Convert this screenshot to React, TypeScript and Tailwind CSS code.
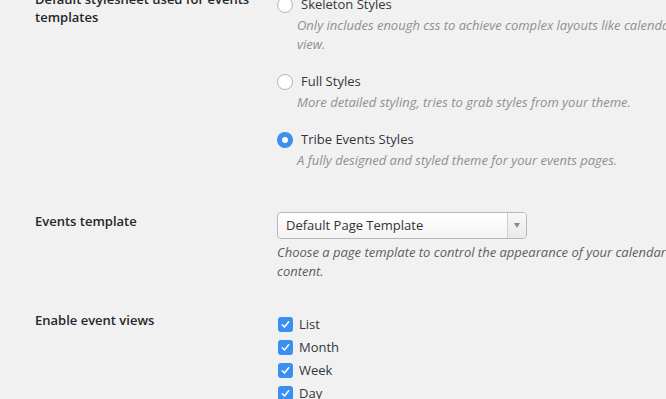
import React from "react";

const font = { fontFamily: '"Open Sans", "Noto Sans", sans-serif' };

function Radio({ checked }: { checked?: boolean }) {
  if (checked) {
    return (
      <span className="flex h-4 w-4 shrink-0 items-center justify-center rounded-full bg-[#3b8ff0]">
        <span className="h-[6px] w-[6px] rounded-full bg-white" />
      </span>
    );
  }
  return <span className="block h-4 w-4 shrink-0 rounded-full border border-[#b5b5b5] bg-white" />;
}

function Check() {
  return (
    <span className="flex h-[15px] w-[15px] shrink-0 items-center justify-center rounded-[3px] bg-[#3b8ff0]">
      <svg width="11" height="11" viewBox="0 0 11 11" fill="none">
        <path d="M2.3 5.8 L4.5 8 L8.7 2.8" stroke="white" strokeWidth="1.5" strokeLinecap="round" strokeLinejoin="round" />
      </svg>
    </span>
  );
}

const radios = [
  {
    label: "Skeleton Styles",
    desc: "Only includes enough css to achieve complex layouts like calendar and week view.",
  },
  { label: "Full Styles", desc: "More detailed styling, tries to grab styles from your theme." },
  { label: "Tribe Events Styles", desc: "A fully designed and styled theme for your events pages.", checked: true },
];

export default function App() {
  return (
    <div className="h-[399px] w-[666px] overflow-hidden bg-[#f1f1f1] text-[13px]" style={font}>
      <div className="mt-[-10px] grid grid-cols-[242px_460px] pl-[35px]">
        {/* Row 1 */}
        <div className="text-[13px] font-semibold leading-[18px] text-[#23282d] pr-4">
          Default stylesheet used for events templates
        </div>
        <div className="mt-[5px] flex flex-col gap-[18px]">
          {radios.map((r) => (
            <div key={r.label}>
              <div className="flex items-center gap-2 leading-[19px] text-[#32373c]">
                <Radio checked={r.checked} />
                <span>{r.label}</span>
              </div>
              <div className="mt-[2px] pl-5 italic leading-[19px] text-[#8f8f8f]">{r.desc}</div>
            </div>
          ))}
        </div>

        {/* Row 2 */}
        <div className="mt-[42px] font-semibold leading-[19px] text-[#23282d]">Events template</div>
        <div className="mt-[42px]">
          <div className="flex h-[27px] w-[250px] items-stretch overflow-hidden rounded-[4px] border border-[#b8b8b8] bg-gradient-to-b from-white to-[#f3f3f3]">
            <div className="flex flex-1 items-center pl-2 text-[#333]">Default Page Template</div>
            <div className="flex w-[19px] items-center justify-center border-l border-[#cfcfcf] bg-gradient-to-b from-[#f8f8f8] to-[#e9e9e9]">
              <svg width="6" height="5" viewBox="0 0 6 5">
                <path d="M0 0 H6 L3 5 Z" fill="#8a8a8a" />
              </svg>
            </div>
          </div>
          <div className="mt-[4px] w-[440px] italic leading-[19px] text-[#5e5e5e]">
            Choose a page template to control the appearance of your calendar related content.
          </div>
        </div>

        {/* Row 3 */}
        <div className="mt-[30px] font-semibold leading-[19px] text-[#23282d]">Enable event views</div>
        <div className="mt-[32px] flex flex-col">
          {["List", "Month", "Week", "Day", "Photo"].map((v) => (
            <div key={v} className="flex h-[23px] items-center gap-[6px] pl-px text-[#32373c]">
              <Check />
              <span>{v}</span>
            </div>
          ))}
        </div>
      </div>
    </div>
  );
}
